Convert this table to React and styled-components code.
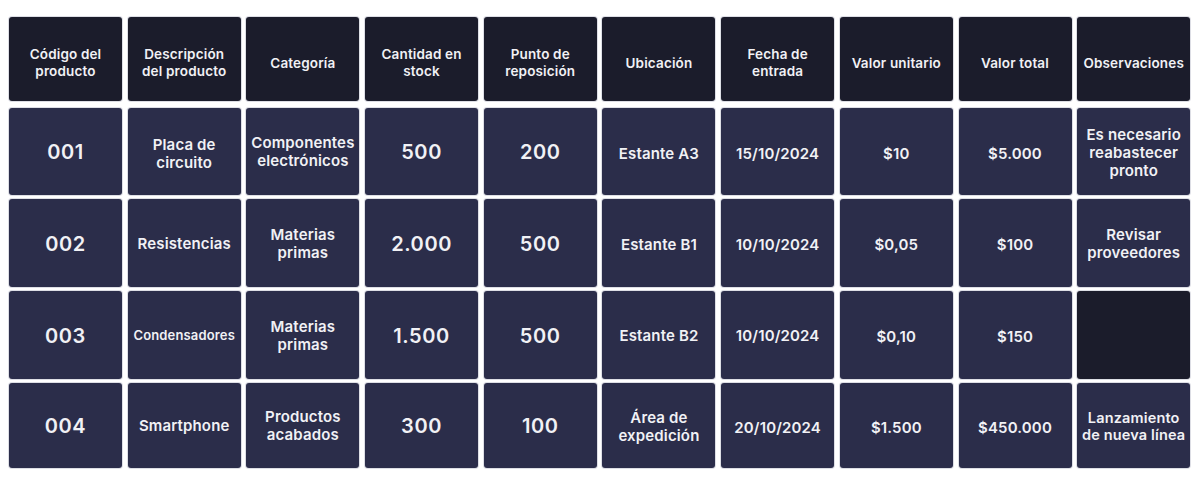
import React from "react";
import styled, { createGlobalStyle } from "styled-components";

const Global = createGlobalStyle`
  html, body { margin: 0; padding: 0; background: #ffffff; }
  body { font-family: Inter, "Noto Sans", sans-serif; }
`;

const Page = styled.div`
  width: 1199px;
  height: 478px;
  box-sizing: border-box;
  padding: 17px 0 0 9px;
`;

const Grid = styled.div`
  display: grid;
  grid-template-columns: repeat(10, 113px);
  grid-template-rows: 87px 87px 88px 88px 85px;
  column-gap: 5.7px;
  row-gap: 4px;
`;

const Cell = styled.div`
  display: flex;
  align-items: center;
  justify-content: center;
  text-align: center;
  box-sizing: border-box;
  border-radius: 3px;
  background: ${(p) => (p.$head || p.$empty ? "#1b1c2b" : "#2b2d4a")};
  box-shadow: 0 0 0 1px rgba(120, 124, 150, 0.25);
  color: #f1f1f5;
  font-weight: 600;
  font-size: ${(p) => p.$size || 15}px;
  line-height: ${(p) => (p.$head ? 1.25 : 1.2)};
  letter-spacing: ${(p) => (p.$size >= 19 ? "0.6px" : "0.15px")};
  padding: ${(p) =>
    p.$head ? "8px 3px 0" : p.$drop ? `${1 + p.$drop * 2}px 4px 0` : "1px 4px 0"};
  margin-bottom: ${(p) => (p.$head ? "3px" : "0")};
`;

const headerBreaks = [
  ["Código del", "producto"],
  ["Descripción", "del producto"],
  ["Categoría"],
  ["Cantidad en", "stock"],
  ["Punto de", "reposición"],
  ["Ubicación"],
  ["Fecha de", "entrada"],
  ["Valor unitario"],
  ["Valor total"],
  ["Observaciones"],
];

const rows = [
  ["001", ["Placa de", "circuito"], ["Componentes", "electrónicos"], "500", "200", ["Estante A3"], ["15/10/2024"], ["$10"], ["$5.000"], ["Es necesario", "reabastecer", "pronto"]],
  ["002", ["Resistencias"], ["Materias", "primas"], "2.000", "500", ["Estante B1"], ["10/10/2024"], ["$0,05"], ["$100"], ["Revisar", "proveedores"]],
  ["003", ["Condensadores"], ["Materias", "primas"], "1.500", "500", ["Estante B2"], ["10/10/2024"], ["$0,10"], ["$150"], null],
  ["004", ["Smartphone"], ["Productos", "acabados"], "300", "100", ["Área de", "expedición"], ["20/10/2024"], ["$1.500"], ["$450.000"], ["Lanzamiento", "de nueva línea"]],
];

const drops = [
  [0, 1.5, 0, 0, 0, 2, 2, 2, 2, 1],
  [0, 0, 0, 0, 0, 1, 1, 1, 1, 0],
  [0, 0, 0, 0, 0, 0.5, 0.5, 1, 1, 0],
  [0, 0, 0, 0, 0, 1, 2, 2, 2, 0],
];

const sizeFor = (col, text) => {
  if (col === 0 || col === 3 || col === 4) return 20;
  if (text && text[0] === "Condensadores") return 13;
  if (text && text[0] === "Lanzamiento") return 14.5;
  return 15;
};

const Lines = ({ lines }) =>
  lines.map((l, i) => (
    <React.Fragment key={i}>
      {i > 0 && <br />}
      {l}
    </React.Fragment>
  ));

export default function App() {
  return (
    <>
      <Global />
      <Page>
        <Grid>
          {headerBreaks.map((h, i) => (
            <Cell key={"h" + i} $head $size={13.5}>
              <span>
                <Lines lines={h} />
              </span>
            </Cell>
          ))}
          {rows.map((r, ri) =>
            r.map((c, ci) =>
              c === null ? (
                <Cell key={ri + "-" + ci} $empty />
              ) : (
                <Cell key={ri + "-" + ci} $size={sizeFor(ci, c)} $drop={drops[ri][ci]}>
                  <span>{Array.isArray(c) ? <Lines lines={c} /> : c}</span>
                </Cell>
              )
            )
          )}
        </Grid>
      </Page>
    </>
  );
}
